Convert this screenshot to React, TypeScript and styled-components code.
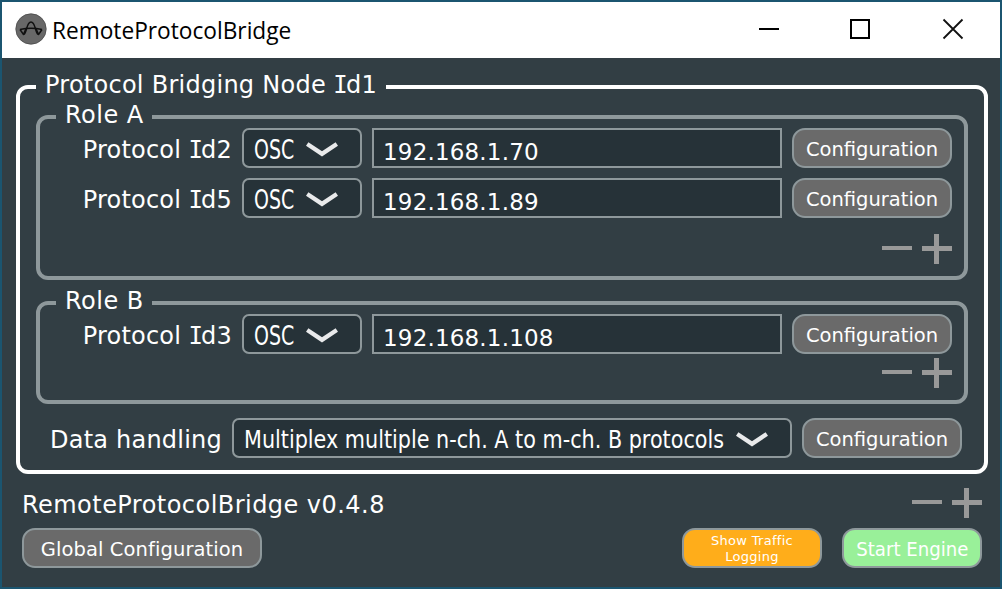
import React from "react";
import styled, { createGlobalStyle } from "styled-components";

const color = {
  frame: "#1b5570",
  background: "#323e44",
  field: "#263238",
  outline: "#8e989b",
  button: "#6a6a6a",
  logging: "#ffad1a",
  start: "#99f099",
  sign: "#999999",
};

const GlobalStyle = createGlobalStyle`
  *, *::before, *::after { box-sizing: border-box; }
  html, body { margin: 0; padding: 0; overflow: hidden; }
`;

const Window = styled.div`
  display: flex;
  flex-direction: column;
  width: 1002px;
  height: 589px;
  border: 2px solid ${color.frame};
  background: ${color.background};
  color: #fff;
  font-family: "DejaVu Sans", sans-serif;
  font-size: 24px;
  white-space: nowrap;
`;

const TitleBar = styled.header`
  display: flex;
  align-items: center;
  flex: none;
  height: 56px;
  padding-left: 13px;
  background: #fff;
  color: #000;
`;

const Title = styled.h1`
  flex: 1;
  margin: 0 0 0 5px;
  font: 400 24px/32px "Open Sans", sans-serif;
`;

const WindowButtons = styled.div`
  display: flex;
  svg { display: block; width: 92px; height: 56px; }
`;

const Content = styled.main`
  display: flex;
  flex-direction: column;
  padding: 18px 12px 0 14px;
`;

const Group = styled.fieldset<{ $color: string }>`
  min-width: 0;
  margin: 0;
  padding: 0;
  border: 4px solid ${(p) => p.$color};
  border-radius: 12px;
`;

const NodeGroup = styled(Group)`
  padding: 8px 16px 12px;
`;

const RoleGroup = styled(Group)`
  margin-bottom: 12px;
  padding: 0 12px 12px;
`;

const Legend = styled.legend<{ $width: number }>`
  width: ${(p) => p.$width}px;
  height: 22px;
  padding: 0 0 0 9px;
  line-height: 19px;
`;

const NodeLegend = styled(Legend)`
  margin-left: 0;
`;

const RoleLegend = styled(Legend)`
  margin-left: 4px;
`;

const Text = styled.span<{ $scale?: number; $spacing?: number; $origin?: string }>`
  display: inline-block;
  letter-spacing: ${(p) => p.$spacing ?? 0}px;
  transform: scaleX(${(p) => p.$scale ?? 1});
  transform-origin: ${(p) => p.$origin ?? "left"} center;
`;

const SerifI = styled.span`
  font-family: "DejaVu Sans Mono", monospace;
  margin: 0 -2px 0 -0.5px;
`;

const Row = styled.div`
  display: flex;
  align-items: center;
  gap: 10px;
  height: 40px;
  & + & { margin-top: 10px; }
`;

const DataRow = styled(Row)`
  margin-top: 14px;
  padding-right: 6px;
`;

const Label = styled.label<{ $width: number }>`
  width: ${(p) => p.$width}px;
  height: 40px;
  text-align: right;
  line-height: 44px;
`;

const Select = styled.div<{ $width: number }>`
  display: flex;
  align-items: center;
  width: ${(p) => p.$width}px;
  height: 40px;
  padding-left: 10px;
  border: 2px solid ${color.outline};
  border-radius: 7px;
  background: ${color.field};
`;

const SelectText = styled.span<{ $width: number; $size: number }>`
  width: ${(p) => p.$width}px;
  height: 36px;
  margin-right: 12px;
  font-size: ${(p) => p.$size}px;
  line-height: ${(p) => (p.$size > 25 ? 40 : 39)}px;
`;

const Address = styled.div`
  width: 410px;
  height: 40px;
  padding: 3px 0 0 9px;
  border: 2px solid ${color.outline};
  background: ${color.field};
  font-size: 23px;
  line-height: 38px;
`;

const Button = styled.button<{ $width: number; $color?: string; $small?: boolean }>`
  display: flex;
  align-items: center;
  justify-content: center;
  width: ${(p) => p.$width}px;
  height: 40px;
  padding: ${(p) => (p.$small ? 1 : 4)}px 0 0;
  border: 2px solid ${color.outline};
  border-radius: 13px;
  background: ${(p) => p.$color ?? color.button};
  color: #fff;
  font-family: inherit;
  font-size: ${(p) => (p.$small ? 13 : 19.5)}px;
  line-height: ${(p) => (p.$small ? "16px" : "32px")};
  white-space: nowrap;
`;

const Signs = styled.div<{ $gap: number }>`
  display: flex;
  justify-content: flex-end;
  gap: 10px;
  margin-top: ${(p) => p.$gap}px;
  svg { display: block; width: 30px; height: 30px; }
`;

const Footer = styled.footer`
  display: flex;
  flex-direction: column;
  gap: 10px;
  padding: 14px 6px 0;
`;

const FooterRow = styled.div`
  display: flex;
  align-items: center;
  gap: 20px;
`;

const Version = styled.div`
  height: 30px;
  line-height: 34px;
`;

const Spacer = styled.div`
  flex: 1;
`;

const IconSlot = styled.div`
  height: 34px;
`;

const AppIcon = () => (
  <IconSlot>
    <svg width="32" height="32" viewBox="0 0 32 32" fill="none">
      <circle cx="16" cy="16" r="15.200" fill="#686868" stroke="#4a4a4a" strokeWidth="0.800" />
      <g stroke="#111" strokeWidth="1.500" strokeLinejoin="round">
        <path d="M9 21.500C12 19 11.500 9 16 9C20.500 9 20 19 23 21.500" />
        <path d="M5 16.500Q16 14 27 16.500" />
        <path d="M5 16.500L8.500 21.500L11 15.500M27 16.500L23.500 21.500L21 15.500" />
      </g>
    </svg>
  </IconSlot>
);

const Chevron = () => (
  <svg width="32" height="18" viewBox="0 0 32 18" fill="none">
    <path d="M1.200 5L16 14.800L30.800 5" stroke="#e9eaeb" strokeWidth="4.300" />
  </svg>
);

const PlusMinus = ({ gap = 0 }: { gap?: number }) => (
  <Signs $gap={gap}>
    <svg viewBox="0 0 30 30"><path d="M0 12H30V16H0Z" fill={color.sign} /></svg>
    <svg viewBox="0 0 30 30"><path d="M0 12H12V0H17V12H30V17H17V30H12V17H0Z" fill={color.sign} /></svg>
  </Signs>
);

const ConfigButton = () => (
  <Button $width={160}><Text>Configuration</Text></Button>
);

const Protocol = ({ id, address }: { id: number; address: string }) => (
  <Row>
    <Label $width={180}><Text $origin="right" $spacing={0.2}>Protocol <SerifI>I</SerifI>d{id}</Text></Label>
    <Select $width={120}>
      <SelectText $width={40} $size={26}><Text $scale={0.73}>OSC</Text></SelectText>
      <Chevron />
    </Select>
    <Address><Text $spacing={0.18}>{address}</Text></Address>
    <ConfigButton />
  </Row>
);

export default function App() {
  return (
    <Window>
      <GlobalStyle />
      <TitleBar>
        <AppIcon />
        <Title><Text $scale={0.945}>RemoteProtocolBridge</Text></Title>
        <WindowButtons>
          <svg viewBox="0 0 92 56"><path d="M35 27H55" stroke="#000" strokeWidth="2" /></svg>
          <svg viewBox="0 0 92 56"><path d="M35 18H53V36H35Z" fill="none" stroke="#000" strokeWidth="2" /></svg>
          <svg viewBox="0 0 92 56"><path d="M35.500 17.500L54.500 36.500M54.500 17.500L35.500 36.500" stroke="#111" strokeWidth="1.800" /></svg>
        </WindowButtons>
      </TitleBar>
      <Content>
        <NodeGroup $color="#fff">
          <NodeLegend $width={350}><Text $spacing={0.26}>Protocol Bridging Node <SerifI>I</SerifI>d1</Text></NodeLegend>
          <RoleGroup $color={color.outline}>
            <RoleLegend $width={96}><Text $spacing={0.5}>Role A</Text></RoleLegend>
            <Protocol id={2} address="192.168.1.70" />
            <Protocol id={5} address="192.168.1.89" />
            <PlusMinus gap={16} />
          </RoleGroup>
          <RoleGroup $color={color.outline}>
            <RoleLegend $width={96}><Text $spacing={0.5}>Role B</Text></RoleLegend>
            <Protocol id={3} address="192.168.1.108" />
            <PlusMinus gap={4} />
          </RoleGroup>
          <DataRow>
            <Label $width={186}><Text $origin="right" $spacing={0.22}>Data handling</Text></Label>
            <Select $width={560}>
              <SelectText $width={480} $size={25}><Text $scale={0.829}>Multiplex multiple n-ch. A to m-ch. B protocols</Text></SelectText>
              <Chevron />
            </Select>
            <ConfigButton />
          </DataRow>
        </NodeGroup>
        <Footer>
          <FooterRow>
            <Version><Text $spacing={0.46}>RemoteProtocolBridge v0.4.8</Text></Version>
            <Spacer />
            <PlusMinus />
          </FooterRow>
          <FooterRow>
            <Button $width={240}><Text $spacing={0.1}>Global Configuration</Text></Button>
            <Spacer />
            <Button $width={140} $color={color.logging} $small><Text $spacing={0.3}>Show Traffic<br />Logging</Text></Button>
            <Button $width={140} $color={color.start}><Text $scale={0.93} $origin="center">Start Engine</Text></Button>
          </FooterRow>
        </Footer>
      </Content>
    </Window>
  );
}
